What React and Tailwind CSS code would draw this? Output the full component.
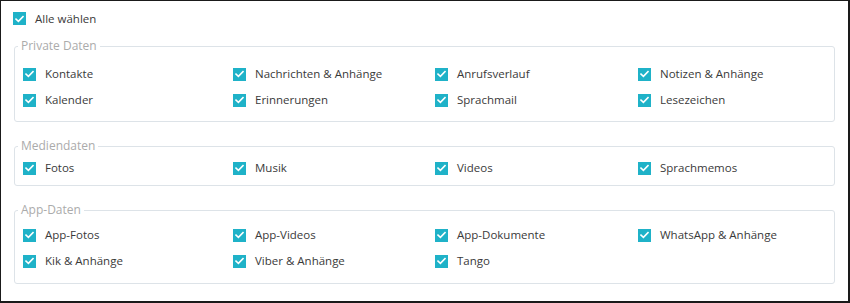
import React from "react";

function Box() {
  return (
    <span className="flex h-[13px] w-[13px] shrink-0 items-center justify-center bg-[#1fb2c8]">
      <svg width="9" height="8" viewBox="0 0 9 8" fill="none">
        <path d="M1 4.2 L3.4 6.4 L8 1.6" stroke="white" strokeWidth="1.6" strokeLinecap="square" />
      </svg>
    </span>
  );
}

function Item({ label }) {
  return (
    <div className="flex h-[26px] items-center gap-[9px]">
      <Box />
      <span className="text-[11.5px] text-[#3a3a3a]">{label}</span>
    </div>
  );
}

function Group({ title, items, pad }) {
  return (
    <fieldset className={`mx-[13px] rounded-[3px] border border-[#dde3e8] px-[8px] ${pad}`}>
      <legend className="ml-[-5px] px-[3px] text-[12px] leading-[14px] text-[#ababab]">{title}</legend>
      <div className="grid grid-cols-[210px_202px_203px_1fr]">
        {items.map((it) => (
          <Item key={it} label={it} />
        ))}
      </div>
    </fieldset>
  );
}

export default function App() {
  return (
    <div
      className="h-[303px] w-[850px] border-b-2 border-l border-r-2 border-t border-[#1a1a1a] bg-white"
      style={{ fontFamily: '"Open Sans", "Noto Sans", sans-serif' }}
    >
      <div className="h-[38px] pl-[12px] pt-[11px]">
        <div className="flex h-[13px] items-center gap-[9px]">
          <Box />
          <span className="text-[11.5px] text-[#3a3a3a]">Alle wählen</span>
        </div>
      </div>
      <div className="flex flex-col gap-[17px]">
        <Group
          title="Private Daten"
          pad="pt-[8px] pb-[8px]"
          items={[
            "Kontakte",
            "Nachrichten & Anhänge",
            "Anrufsverlauf",
            "Notizen & Anhänge",
            "Kalender",
            "Erinnerungen",
            "Sprachmail",
            "Lesezeichen",
          ]}
        />
        <Group title="Mediendaten" pad="pt-[2px] pb-[4px]" items={["Fotos", "Musik", "Videos", "Sprachmemos"]} />
        <Group
          title="App-Daten"
          pad="pt-[5px] pb-[9px]"
          items={[
            "App-Fotos",
            "App-Videos",
            "App-Dokumente",
            "WhatsApp & Anhänge",
            "Kik & Anhänge",
            "Viber & Anhänge",
            "Tango",
          ]}
        />
      </div>
    </div>
  );
}
